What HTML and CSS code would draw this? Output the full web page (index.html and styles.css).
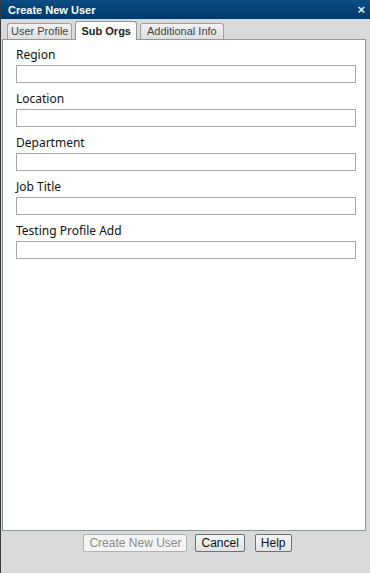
FILE: index.html
```html
<!DOCTYPE html>
<html lang="en">
<head>
    <meta charset="UTF-8">
    <title>Create New User</title>
    <link rel="stylesheet" href="styles.css">
</head>
<body>
    <div class="window">
        <div class="titlebar">
            <span class="title">Create New User</span>
            <span class="close">&#215;</span>
        </div>

        <div class="tabs">
            <div class="tab">User Profile</div>
            <div class="tab active">Sub Orgs</div>
            <div class="tab wide">Additional Info</div>
        </div>

        <div class="panel">
            <div class="field">
                <label>Region</label>
                <input type="text">
            </div>
            <div class="field">
                <label>Location</label>
                <input type="text">
            </div>
            <div class="field">
                <label>Department</label>
                <input type="text">
            </div>
            <div class="field">
                <label>Job Title</label>
                <input type="text">
            </div>
            <div class="field">
                <label>Testing Profile Add</label>
                <input type="text">
            </div>
        </div>

        <div class="buttons">
            <button disabled>Create New User</button>
            <button>Cancel</button>
            <button class="help">Help</button>
        </div>
    </div>
</body>
</html>
```

FILE: styles.css
```css
body {
    margin: 0;
    padding: 0;
    font-family: "Liberation Sans", Arial, sans-serif;
}

.window {
    width: 370px;
    height: 573px;
    background-color: #d9d9d9;
    border-left: 1px solid #3a3a3a;
    box-sizing: border-box;
}

.titlebar {
    height: 19px;
    background: linear-gradient(#0a4c84, #003a6b);
    color: #fff;
    display: flex;
    align-items: center;
    justify-content: space-between;
    padding: 0 5px 0 7px;
}

.title {
    font-size: 11px;
    font-weight: bold;
}

.close {
    font-size: 13px;
    font-weight: bold;
    color: #e6ecf2;
}

.tabs {
    display: flex;
    align-items: flex-end;
    gap: 3px;
    padding: 2px 0 0 6px;
    height: 18px;
    position: relative;
    z-index: 1;
}

.tab {
    height: 15px;
    line-height: 15px;
    padding: 0 3px;
    font-size: 11px;
    color: #444;
    background: linear-gradient(#f2f2f2, #dedede);
    border: 1px solid #9aa3a3;
    border-bottom: none;
    border-radius: 3px 3px 0 0;
}

.tab.wide {
    padding: 0 6px;
}

.tab.active {
    height: 18px;
    line-height: 19px;
    padding: 0 5px;
    background: #fff;
    color: #222;
    font-weight: bold;
    border-color: #8c9a9a;
    margin-bottom: -1px;
}

.panel {
    height: 492px;
    margin: 0 4px 0 1px;
    background-color: #fff;
    border: 1px solid #8c9a9a;
    border-left-color: #7f8c8c;
    box-sizing: border-box;
    padding: 5px 0 0 13px;
}

.field {
    margin-bottom: 6px;
}

.field label {
    display: block;
    font-family: "Noto Sans", "DejaVu Sans", sans-serif;
    font-size: 12px;
    color: #111;
    height: 20px;
    line-height: 20px;
}

.field input {
    display: block;
    width: 340px;
    height: 18px;
    box-sizing: border-box;
    border: 1px solid #a8a8a8;
    margin: 0;
    padding: 1px 3px;
    font-size: 12px;
}

.buttons {
    display: flex;
    justify-content: center;
    gap: 8px;
    padding: 3px 0 0 4px;
}

.buttons button {
    font-family: "Liberation Sans", Arial, sans-serif;
    font-size: 12px;
    height: 18px;
    padding: 0 5px;
    color: #111;
    background: linear-gradient(#f6f6f6, #e2e2e2);
    border: 1px solid #707070;
    border-radius: 2px;
}

.buttons button:disabled {
    color: #8a8a8a;
    border-color: #adb2b5;
    background: #f4f4f4;
}

.buttons .help {
    margin-left: 2px;
}
```
